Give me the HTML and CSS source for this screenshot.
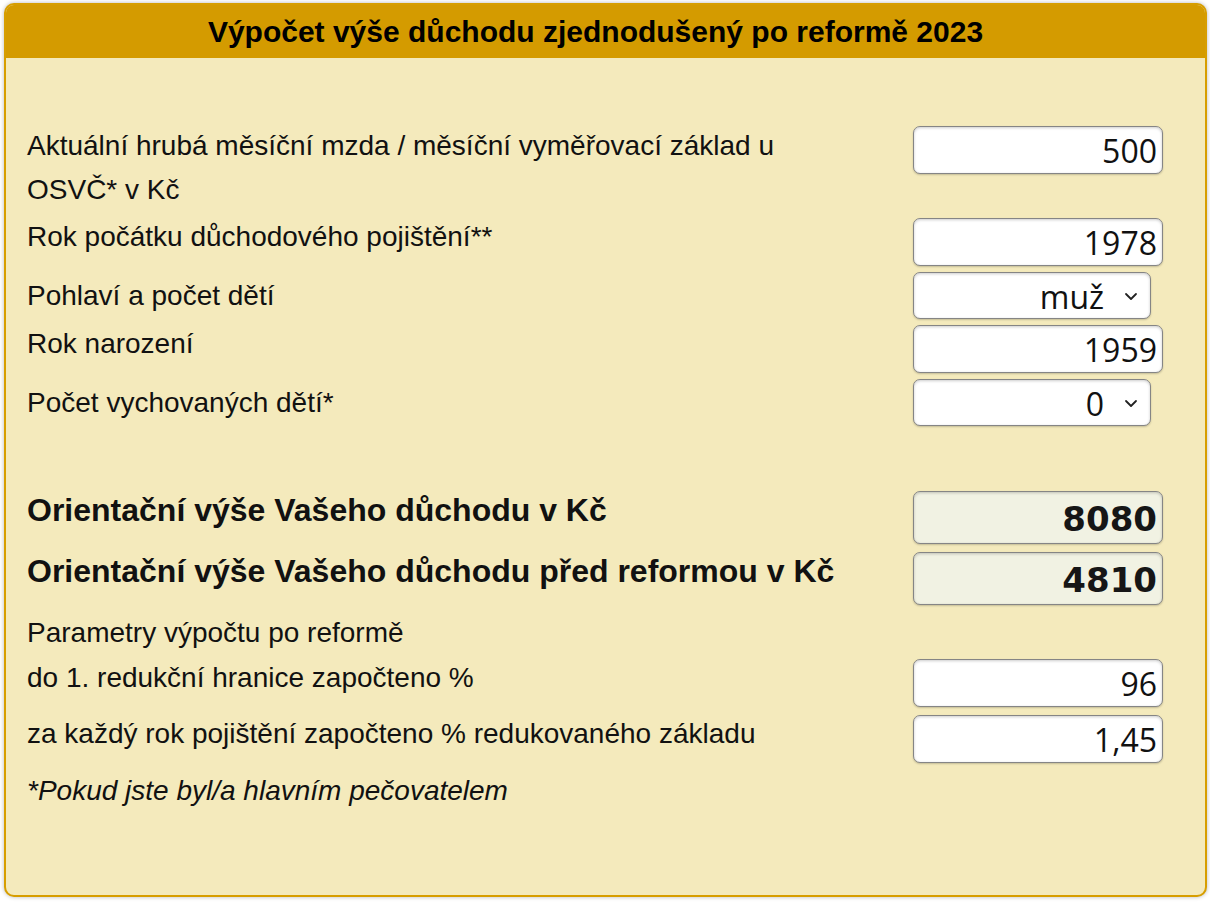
FILE: index.html
```html
<!DOCTYPE html>
<html lang="cs">
<head>
<meta charset="utf-8">
<title>Výpočet výše důchodu</title>
<link rel="stylesheet" href="styles.css">
</head>
<body>
<div class="calc">
  <div class="calc-head">Výpočet výše důchodu zjednodušený po reformě 2023</div>
  <div class="calc-body">
    <div class="row row-top">
      <div class="label label-2">Aktuální hrubá měsíční mzda / měsíční vyměřovací základ u OSVČ* v Kč</div>
      <input class="field" type="text" value="500">
    </div>
    <div class="row">
      <div class="label label-up">Rok počátku důchodového pojištění**</div>
      <input class="field" type="text" value="1978">
    </div>
    <div class="row">
      <div class="label">Pohlaví a počet dětí</div>
      <div class="sel-wrap">
        <select class="sel"><option>muž</option><option>žena</option></select>
        <svg class="chev" width="14" height="9" viewBox="0 0 14 9"><path d="M2 2 L7 7 L12 2" fill="none" stroke="#222" stroke-width="1.8" stroke-linecap="round" stroke-linejoin="round"/></svg>
      </div>
    </div>
    <div class="row">
      <div class="label label-up">Rok narození</div>
      <input class="field" type="text" value="1959">
    </div>
    <div class="row">
      <div class="label">Počet vychovaných dětí*</div>
      <div class="sel-wrap">
        <select class="sel"><option>0</option><option>1</option><option>2</option></select>
        <svg class="chev" width="14" height="9" viewBox="0 0 14 9"><path d="M2 2 L7 7 L12 2" fill="none" stroke="#222" stroke-width="1.8" stroke-linecap="round" stroke-linejoin="round"/></svg>
      </div>
    </div>
    <div class="spacer"></div>
    <div class="row">
      <div class="label label-bold label-up2">Orientační výše Vašeho důchodu v Kč</div>
      <input class="field result" type="text" value="8080" readonly>
    </div>
    <div class="row">
      <div class="label label-bold label-up2">Orientační výše Vašeho důchodu před reformou v Kč</div>
      <input class="field result" type="text" value="4810" readonly>
    </div>
    <div class="row row-text">
      <div class="label">Parametry výpočtu po reformě</div>
    </div>
    <div class="row">
      <div class="label label-up">do 1. redukční hranice započteno %</div>
      <input class="field" type="text" value="96">
    </div>
    <div class="row">
      <div class="label label-up">za každý rok pojištění započteno % redukovaného základu</div>
      <input class="field" type="text" value="1,45">
    </div>
    <div class="row row-text">
      <div class="label note">*Pokud jste byl/a hlavním pečovatelem</div>
    </div>
  </div>
</div>
</body>
</html>
```

FILE: styles.css
```css
html, body {
  margin: 0;
  padding: 0;
  background: #ffffff;
}

.calc {
  margin: 3px 3px 5px 4px;
  height: 890px;
  border: 2px solid #d79e00;
  border-radius: 10px;
  background: #f4eabc;
  box-shadow: 0 0 4px rgba(0, 0, 0, 0.28);
  overflow: hidden;
  display: flex;
  flex-direction: column;
  font-family: "Liberation Sans", Arial, sans-serif;
  color: #111111;
}

.calc-head {
  background: #d49b00;
  height: 53px;
  display: flex;
  align-items: center;
  justify-content: center;
  padding-right: 20px;
  font-weight: bold;
  font-size: 30px;
  color: #000000;
}

.calc-body {
  padding: 66px 42px 0 21px;
  display: flex;
  flex-direction: column;
}

.row {
  display: flex;
  align-items: center;
  justify-content: space-between;
}

.row-top {
  align-items: flex-start;
}

.row-top .field {
  margin-top: 2px;
}

.label {
  width: 820px;
  font-size: 28px;
  line-height: 44px;
}

.label-2 {
  padding-bottom: 2px;
}

.label-up {
  padding-bottom: 11px;
}

.label-up2 {
  padding-bottom: 15px;
}

.label-bold {
  font-weight: bold;
  font-size: 32px;
}

.row-text .label {
  padding-top: 2px;
}

.note {
  font-style: italic;
}

.field {
  box-sizing: border-box;
  width: 250px;
  height: 48px;
  margin: 4px 0;
  padding: 1px 5px 0 5px;
  border: 1px solid #858585;
  border-radius: 7px;
  background: #ffffff;
  box-shadow: inset 0 1px 3px rgba(0, 0, 0, 0.2), 0 1px 2px rgba(0, 0, 0, 0.2);
  font-family: "Open Sans", "Noto Sans", sans-serif;
  font-size: 32px;
  color: #111111;
  text-align: right;
  outline: none;
}

.result {
  height: 53px;
  padding-top: 3px;
  background: #f1f2e3;
  font-family: "DejaVu Sans", Verdana, sans-serif;
  font-weight: bold;
  font-size: 34px;
  color: #161616;
}

.sel-wrap {
  position: relative;
  width: 250px;
  margin: 2px 0;
}

.sel {
  box-sizing: border-box;
  display: block;
  width: 238px;
  height: 47px;
  padding: 2px 46px 0 8px;
  border: 1px solid #858585;
  border-radius: 7px;
  background: #ffffff;
  box-shadow: inset 0 1px 3px rgba(0, 0, 0, 0.2), 0 1px 2px rgba(0, 0, 0, 0.2);
  font-family: "Open Sans", "Noto Sans", sans-serif;
  font-size: 32px;
  color: #111111;
  text-align: right;
  text-align-last: right;
  -webkit-appearance: none;
  appearance: none;
  outline: none;
}

.chev {
  position: absolute;
  left: 211px;
  top: 20px;
  pointer-events: none;
}

.spacer {
  height: 59px;
}
```
